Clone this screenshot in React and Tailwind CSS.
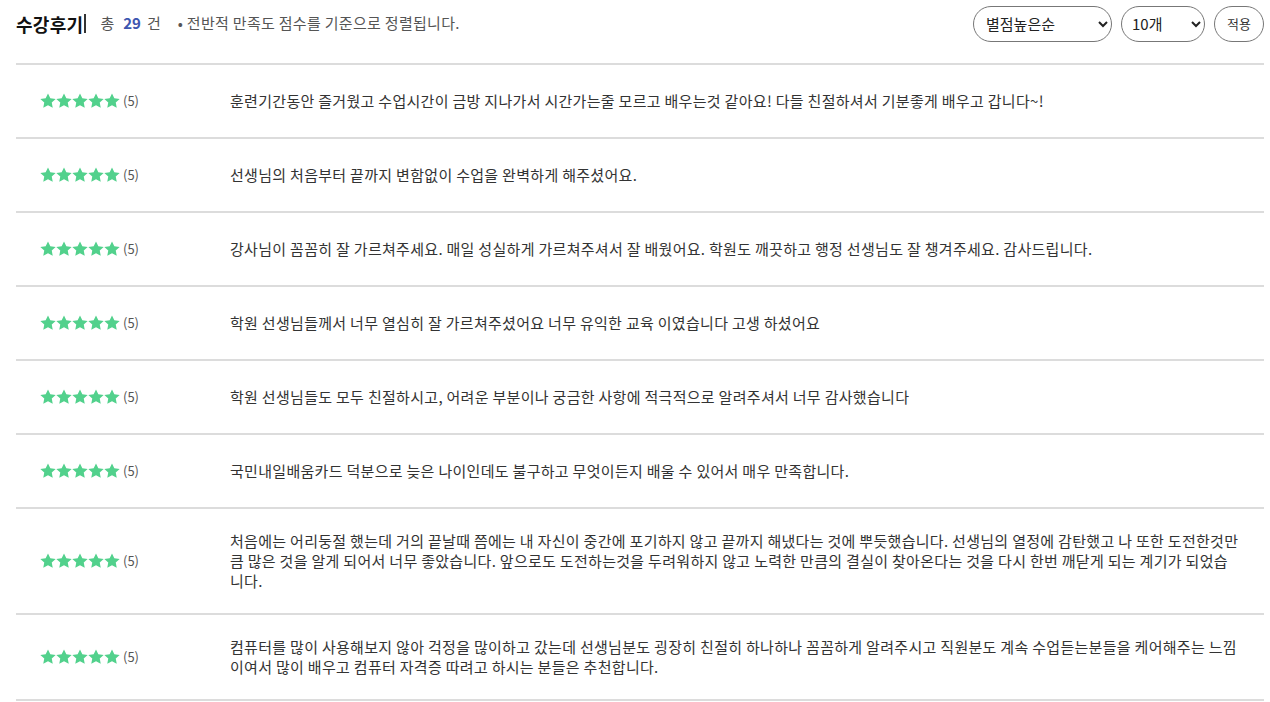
import { useState } from 'react';

const reviews = [
  '훈련기간동안 즐거웠고 수업시간이 금방 지나가서 시간가는줄 모르고 배우는것 같아요! 다들 친절하셔서 기분좋게 배우고 갑니다~!',
  '선생님의 처음부터 끝까지 변함없이 수업을 완벽하게 해주셨어요.',
  '강사님이 꼼꼼히 잘 가르쳐주세요. 매일 성실하게 가르쳐주셔서 잘 배웠어요. 학원도 깨끗하고 행정 선생님도 잘 챙겨주세요. 감사드립니다.',
  '학원 선생님들께서 너무 열심히 잘 가르쳐주셨어요 너무 유익한 교육 이였습니다 고생 하셨어요',
  '학원 선생님들도 모두 친절하시고, 어려운 부분이나 궁금한 사항에 적극적으로 알려주셔서 너무 감사했습니다',
  '국민내일배움카드 덕분으로 늦은 나이인데도 불구하고 무엇이든지 배울 수 있어서 매우 만족합니다.',
  '처음에는 어리둥절 했는데 거의 끝날때 쯤에는 내 자신이 중간에 포기하지 않고 끝까지 해냈다는 것에 뿌듯했습니다. 선생님의 열정에 감탄했고 나 또한 도전한것만큼 많은 것을 알게 되어서 너무 좋았습니다. 앞으로도 도전하는것을 두려워하지 않고 노력한 만큼의 결실이 찾아온다는 것을 다시 한번 깨닫게 되는 계기가 되었습니다.',
  '컴퓨터를 많이 사용해보지 않아 걱정을 많이하고 갔는데 선생님분도 굉장히 친절히 하나하나 꼼꼼하게 알려주시고 직원분도 계속 수업듣는분들을 케어해주는 느낌이여서 많이 배우고 컴퓨터 자격증 따려고 하시는 분들은 추천합니다.',
];

function Star() {
  return (
    <svg viewBox="0 0 24 24" className="w-[16px] h-[16px]" fill="#52d18c">
      <path d="M12 .6l3.5 7.3 8 1-5.9 5.5 1.5 7.9L12 18.4l-7.1 3.9 1.5-7.9L.5 8.9l8-1z" />
    </svg>
  );
}

export default function App() {
  const [sort, setSort] = useState('high');
  const [size, setSize] = useState('10');

  return (
    <div className="min-h-screen bg-white pl-4 pr-[6px] text-[#333]" style={{ fontFamily: '"Noto Sans CJK KR", "Noto Sans", sans-serif' }}>
      {/* Header */}
      <div className="flex items-center h-[47px]">
        <h2 className="text-[18px] font-bold text-[#111] leading-none flex items-center tracking-[0.3px]">
          수강후기
          <span className="inline-block w-[2px] h-[19px] bg-[#333] ml-[1px]" />
        </h2>
        <span className="ml-[14px] text-[15px] text-[#555]">총</span>
        <span className="ml-[9px] text-[15px] font-bold text-[#3d56b0]">29</span>
        <span className="ml-[6px] text-[15px] text-[#555]">건</span>
        <span className="ml-[17px] text-[15px] text-[#555] tracking-[0.3px]">• 전반적 만족도 점수를 기준으로 정렬됩니다.</span>
        <div className="ml-auto flex items-center gap-[9px]">
          <select
            value={sort}
            onChange={(e) => setSort(e.target.value)}
            className="w-[139px] h-[36px] rounded-full border border-[#777] px-[8px] text-[15px] text-[#222] bg-white"
          >
            <option value="high">별점높은순</option>
            <option value="low">별점낮은순</option>
            <option value="new">최신순</option>
          </select>
          <select
            value={size}
            onChange={(e) => setSize(e.target.value)}
            className="w-[84px] h-[36px] rounded-full border border-[#777] px-[6px] text-[15px] text-[#222] bg-white"
          >
            <option value="10">10개</option>
            <option value="20">20개</option>
            <option value="30">30개</option>
          </select>
          <button className="w-[50px] h-[36px] rounded-full border border-[#777] text-[13px] text-[#333] bg-white">
            적용
          </button>
        </div>
      </div>

      {/* List */}
      <div className="mt-[16px] border-t-2 border-[#dcdcdc]">
        {reviews.map((text, i) => (
          <div key={i} className="flex items-center min-h-[74px] pt-[22px] pb-[22px] border-b-2 border-[#dcdcdc]">
            <div className="w-[214px] shrink-0 pl-[24px] flex items-center">
              <Star /><Star /><Star /><Star /><Star />
              <span className="ml-[3px] text-[13px] text-[#555]">(5)</span>
            </div>
            <p className="flex-1 pr-[24px] text-[15px] tracking-[0.3px] leading-[20px] text-[#333]">{text}</p>
          </div>
        ))}
      </div>
    </div>
  );
}
